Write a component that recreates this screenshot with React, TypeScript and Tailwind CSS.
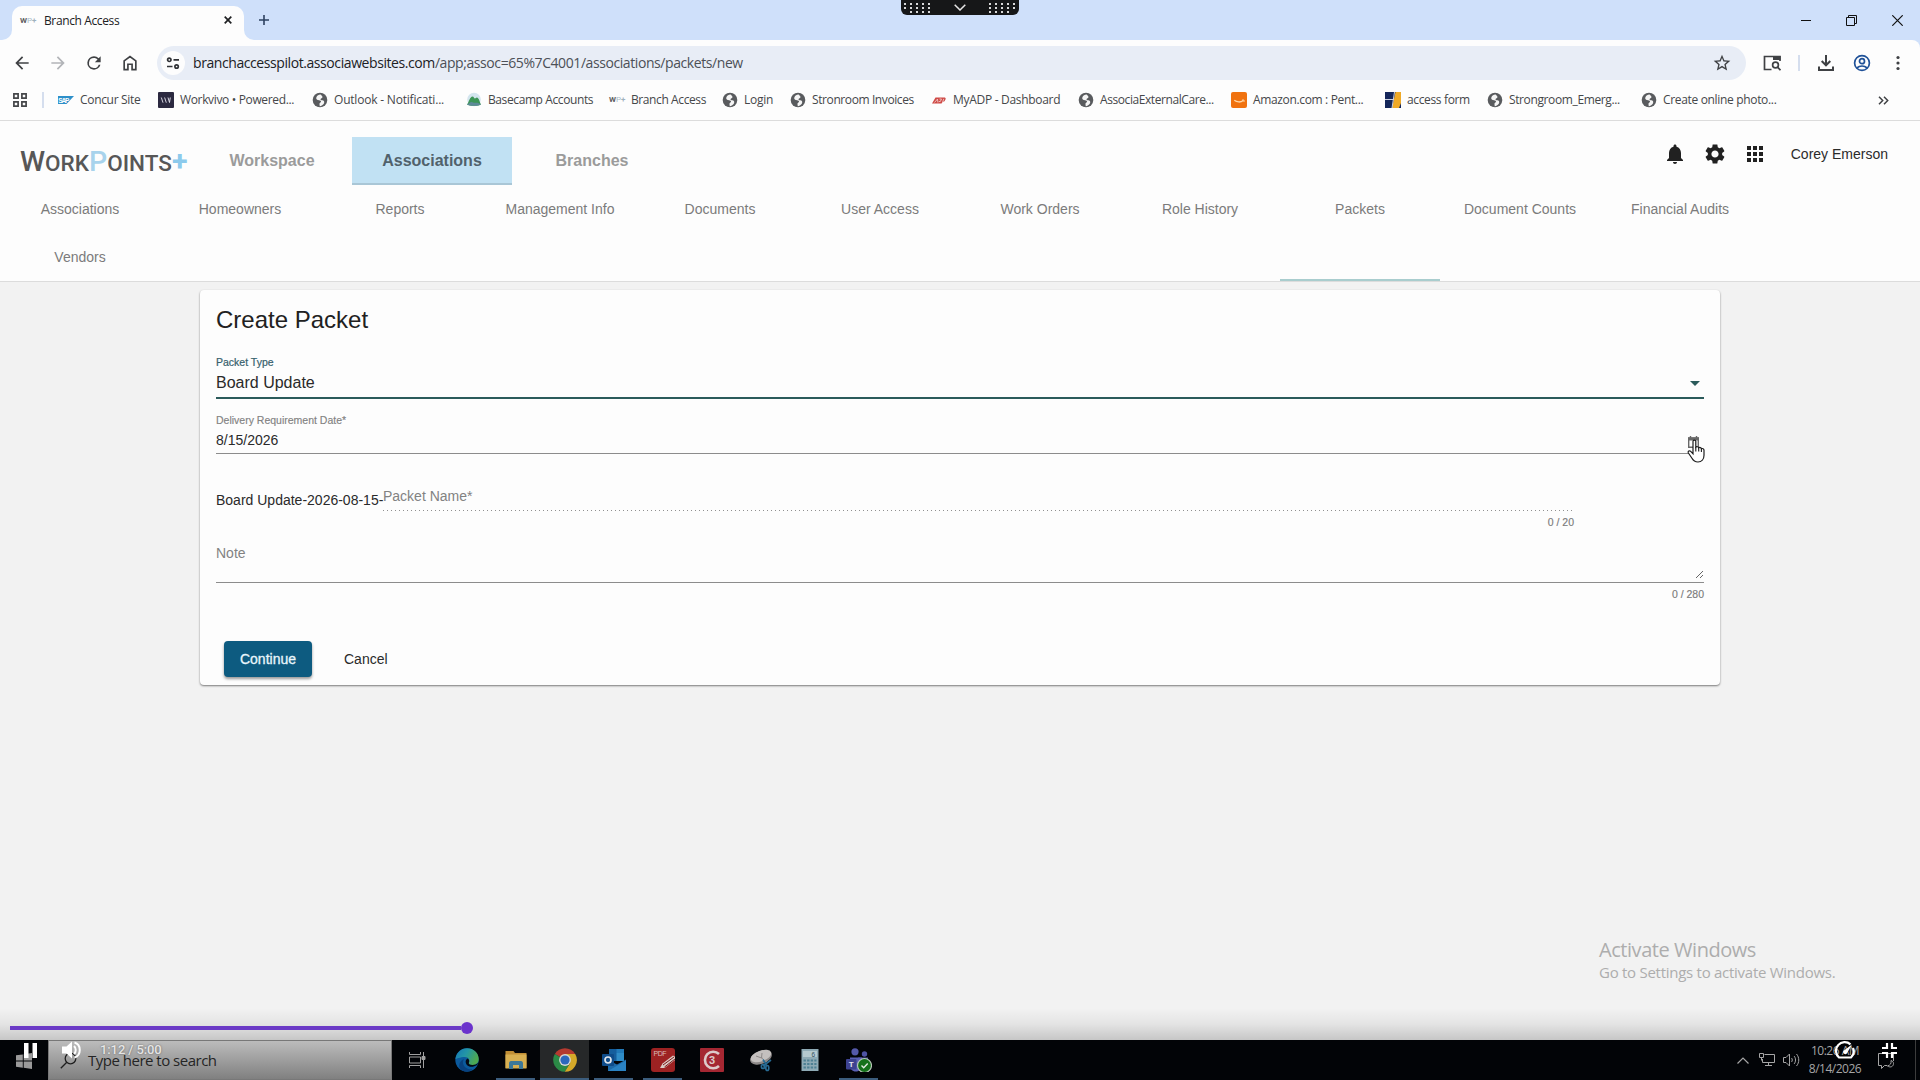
import React from "react";

interface Bookmark {
  label: string;
  icon: React.ReactNode;
  cell: string;
  tracking: string;
}

interface TaskApp {
  name: string;
  icon: React.ReactNode;
  state: "idle" | "open" | "active";
}

const GlobeIcon: React.FC = () => (
  <svg className="h-4 w-4 shrink-0" viewBox="0 0 16 16">
    <circle cx="8" cy="8" r="7.3" fill="#595b5e" />
    <path
      d="M8.600 2.600C7 2.400 5.200 3.600 4.400 5.200 3.800 6.600 4.600 7.600 6 8c1.300.3 2.800.3 3 1.300.2 1-1.200 1.300-1.500 2.300-.2.900.3 1.700.2 2.600 1.500.1 3.400-1.300 4.200-2.700.6-1.200.4-2.500-.7-3-1-.4-2.300-.2-2.700-1-.3-.8.9-1 1.500-1.500.8-.7.4-1.700-.2-2.200z"
      fill="#f5f5f5"
    />
  </svg>
);

const WpMark: React.FC = () => (
  <span className="flex h-4 w-4 shrink-0 items-center overflow-visible font-['Roboto',sans-serif] text-[8px] font-bold leading-none text-[#5f5f5f]">
    W<span className="font-normal text-[#a9bcc8]">P</span>
    <span className="text-[#9fb2bd]">+</span>
  </span>
);

const SapIcon: React.FC = () => (
  <svg className="h-4 w-4 shrink-0" viewBox="0 0 16 16">
    <path d="M0 4h16l-7.500 8H0z" fill="#2d8fc9" />
    <text x="0.300" y="10.500" fontSize="6.500" fontWeight="700" fontFamily="Liberation Sans" fill="#fff" textLength="11">
      SAP
    </text>
  </svg>
);

const WorkvivoIcon: React.FC = () => (
  <svg className="h-4 w-4 shrink-0" viewBox="0 0 16 16">
    <rect width="16" height="16" rx="1" fill="#2b2940" />
    <path d="M3.300 5.500l1.700 5.200M6.600 5.500l1.700 5.200M10 5.500l1.500 5 .8-5" stroke="#e8e6f0" strokeWidth=".9" fill="none" />
  </svg>
);

const BasecampIcon: React.FC = () => (
  <svg className="h-4 w-4 shrink-0" viewBox="0 0 16 16">
    <circle cx="8" cy="7.500" r="6.800" fill="#d3e5ee" />
    <path d="M1 12.500C3 10 4 4.500 6.500 4.500c1.300 0 1.500 2 2.500 2 .8 0 1-1 1.800-1C13 5.500 14 11 15 12.500c-2 1.700-12 1.700-14 0z" fill="#3c9557" />
    <path d="M1 12.500c2-.8 3-2.500 4.500-2.500s2 1 4 .8 3.500.2 5.500 1.700c-2 1.700-12 1.700-14 0z" fill="#5d8a98" />
  </svg>
);

const AdpIcon: React.FC = () => (
  <svg className="h-4 w-4 shrink-0" viewBox="0 0 16 16">
    <path d="M1 11.500L4.500 5.500h9.500l.8 1.200-1.300 2.600-2 .6-1 1.600z" fill="#cf4a46" />
    <path d="M3.500 10.500L6.500 7l.4 3.500M8.500 7h2L9.300 9.500H7.800M11.500 10.300l1.300-3.500" stroke="#f3d5d4" strokeWidth=".8" fill="none" />
  </svg>
);

const AmazonIcon: React.FC = () => (
  <svg className="h-4 w-4 shrink-0" viewBox="0 0 16 16">
    <rect width="16" height="16" rx="2" fill="#f0720f" />
    <path d="M3.300 8.300c2.500 2.200 6.500 2.200 9 .2" stroke="#ffd9a8" strokeWidth="1.300" fill="none" />
    <path d="M11 8h2v2" stroke="#ffd9a8" strokeWidth=".9" fill="none" />
  </svg>
);

const AccessIcon: React.FC = () => (
  <svg className="h-4 w-4 shrink-0" viewBox="0 0 16 16">
    <rect width="16" height="16" fill="#14265a" />
    <path d="M10.500 0H16v11l-2 5H7z" fill="#efa927" />
    <path d="M0 7.500h9M9.500 0L7 16" stroke="#c9cede" strokeWidth="1" />
  </svg>
);

const bookmarks: Bookmark[] = [
  { label: "Concur Site", icon: <SapIcon />, cell: "w-[100px]", tracking: "tracking-[-0.32px]" },
  { label: "Workvivo • Powered...", icon: <WorkvivoIcon />, cell: "w-[154px]", tracking: "tracking-[-0.35px]" },
  { label: "Outlook - Notificati...", icon: <GlobeIcon />, cell: "w-[154px]", tracking: "tracking-[-0.2px]" },
  { label: "Basecamp Accounts", icon: <BasecampIcon />, cell: "w-[143px]", tracking: "tracking-[-0.4px]" },
  { label: "Branch Access", icon: <WpMark />, cell: "w-[113px]", tracking: "tracking-[-0.4px]" },
  { label: "Login", icon: <GlobeIcon />, cell: "w-[68px]", tracking: "tracking-[-0.25px]" },
  { label: "Stronroom Invoices", icon: <GlobeIcon />, cell: "w-[141px]", tracking: "tracking-[-0.4px]" },
  { label: "MyADP - Dashboard", icon: <AdpIcon />, cell: "w-[147px]", tracking: "tracking-[-0.3px]" },
  { label: "AssociaExternalCare...", icon: <GlobeIcon />, cell: "w-[153px]", tracking: "tracking-[-0.42px]" },
  { label: "Amazon.com : Pent...", icon: <AmazonIcon />, cell: "w-[154px]", tracking: "tracking-[-0.35px]" },
  { label: "access form", icon: <AccessIcon />, cell: "w-[102px]", tracking: "tracking-[-0.35px]" },
  { label: "Strongroom_Emerg...", icon: <GlobeIcon />, cell: "w-[154px]", tracking: "tracking-[-0.38px]" },
  { label: "Create online photo...", icon: <GlobeIcon />, cell: "w-[140px]", tracking: "tracking-[-0.33px]" },
];

const subNav = [
  "Associations",
  "Homeowners",
  "Reports",
  "Management Info",
  "Documents",
  "User Access",
  "Work Orders",
  "Role History",
  "Packets",
  "Document Counts",
  "Financial Audits",
  "Vendors",
];

const TabStrip: React.FC = () => (
  <div className="flex h-10 items-end bg-[#cfe0fa]">
    <div className="relative ml-3 flex h-[34px] w-[232px] items-center rounded-t-[10px] bg-[#fdfdfd] pb-1 pl-2">
      <svg className="absolute -left-[10px] bottom-0 h-[10px] w-[10px]" viewBox="0 0 10 10">
        <path d="M10 0v10H0A10 10 0 0 0 10 0z" fill="#fdfdfd" />
      </svg>
      <svg className="absolute -right-[10px] bottom-0 h-[10px] w-[10px]" viewBox="0 0 10 10">
        <path d="M0 0v10h10A10 10 0 0 1 0 0z" fill="#fdfdfd" />
      </svg>
      <WpMark />
      <span className="ml-2 grow text-[12px] tracking-[-0.38px] text-[#202124]">Branch Access</span>
      <svg className="mb-[3px] mr-3 h-2 w-2" viewBox="0 0 8 8">
        <path d="M.7.7l6.600 6.600M7.300.7L.7 7.300" stroke="#1f2022" strokeWidth="1.700" />
      </svg>
    </div>
    <svg className="mb-[15px] ml-[15px] h-[10px] w-[10px]" viewBox="0 0 10 10">
      <path d="M5 0v10M0 5h10" stroke="#2d4160" strokeWidth="1.600" />
    </svg>
    <div className="mb-[14px] ml-auto mr-[17px] flex items-center gap-[35px]">
      <svg className="h-3 w-[10px]" viewBox="0 0 10 12">
        <path d="M0 6.500h10" stroke="#111" />
      </svg>
      <svg className="h-[11px] w-[11px]" viewBox="0 0 11 11">
        <path d="M.5 2.500h8v8h-8zM2.500 2.500v-2h8v8h-2" fill="none" stroke="#111" />
      </svg>
      <svg className="h-[11px] w-[11px]" viewBox="0 0 11 11">
        <path d="M.3.3l10.400 10.400M10.700.3L.3 10.700" stroke="#111" strokeWidth="1.200" />
      </svg>
    </div>
  </div>
);

const Toolbar: React.FC = () => (
  <div className="flex h-[46px] items-center rounded-tr-lg bg-[#fdfdfd]">
    <div className="flex w-[157px] items-center gap-4 pl-3 text-[#3f4144]">
      <svg className="h-5 w-5" viewBox="0 0 24 24" fill="currentColor">
        <path d="M20 11H7.830l5.590-5.590L12 4l-8 8 8 8 1.410-1.410L7.830 13H20v-2z" />
      </svg>
      <svg className="h-5 w-5 text-[#b2b4b8]" viewBox="0 0 24 24" fill="currentColor">
        <path d="M12 4l-1.410 1.410L16.170 11H4v2h12.170l-5.580 5.590L12 20l8-8z" />
      </svg>
      <svg className="h-5 w-5" viewBox="0 0 24 24" fill="currentColor">
        <path d="M17.650 6.350A7.958 7.958 0 0 0 12 4a8 8 0 1 0 7.730 10h-2.080A6 6 0 1 1 12 6c1.660 0 3.140.69 4.220 1.780L13 11h7V4l-2.350 2.350z" />
      </svg>
      <svg className="h-5 w-5" viewBox="0 0 24 24" fill="none" stroke="currentColor" strokeWidth="2">
        <path d="M5 20V9.500l7-5.300 7 5.300V20h-4.500v-6.500h-5V20z" />
      </svg>
    </div>
    <div className="flex h-[34px] w-[1589px] items-center rounded-full bg-[#e8edf6] pl-1 pr-[14px]">
      <span className="flex h-6 w-6 items-center justify-center rounded-full bg-[#fdfdfd]">
        <svg className="h-[14px] w-[14px]" viewBox="0 0 14 14" fill="none" stroke="#303236" strokeWidth="1.700">
          <circle cx="3.300" cy="3.800" r="1.700" />
          <path d="M7.500 3.800H13M1 10.500h5.500" />
          <circle cx="10.600" cy="10.500" r="1.700" />
        </svg>
      </span>
      <span className="mb-px ml-2 text-[14px] tracking-[-0.42px] text-[#4c5057]">
        <span className="text-[#202124]">branchaccesspilot.associawebsites.com</span>
        /app;assoc=65%7C4001/associations/packets/new
      </span>
      <svg className="ml-auto h-5 w-5" viewBox="0 0 24 24" fill="#3f4144">
        <path d="M22 9.240l-7.190-.62L12 2 9.190 8.630 2 9.240l5.460 4.730L5.820 21 12 17.270 18.180 21l-1.630-7.030L22 9.240zM12 15.400l-3.760 2.270 1-4.280-3.320-2.880 4.380-.38L12 6.100l1.710 4.040 4.380.38-3.320 2.880 1 4.280L12 15.400z" />
      </svg>
    </div>
    <div className="flex grow items-center text-[#3f4144]">
      <svg className="ml-[17px] h-[18px] w-[18px]" viewBox="0 0 18 18" fill="none" stroke="currentColor" strokeWidth="1.700">
        <path d="M8.500 15.500H1.500v-13H17V7" />
        <path d="M10 2h7.500v4H10z" fill="currentColor" stroke="none" />
        <circle cx="12.500" cy="11" r="2.900" />
        <path d="M14.500 13.200l3 3" />
      </svg>
      <span className="ml-[17px] h-4 w-[2px] bg-[#d5deee]" />
      <svg className="ml-[17px] h-[18px] w-[18px]" viewBox="0 0 18 18" fill="none" stroke="currentColor" strokeWidth="2">
        <path d="M9 1v10M4.700 7L9 11.300 13.300 7M2 12.500V16h14v-3.500" />
      </svg>
      <svg className="ml-[18px] h-[18px] w-[18px]" viewBox="0 0 18 18" fill="none" stroke="#1f5198" strokeWidth="1.700">
        <circle cx="9" cy="9" r="7.400" />
        <circle cx="9" cy="7.200" r="2.500" />
        <path d="M3.800 14c3-2.700 7.400-2.700 10.400 0" />
      </svg>
      <svg className="ml-[17px] h-5 w-5" viewBox="0 0 20 20" fill="currentColor">
        <circle cx="10" cy="4.500" r="1.600" />
        <circle cx="10" cy="10" r="1.600" />
        <circle cx="10" cy="15.500" r="1.600" />
      </svg>
    </div>
  </div>
);

const BookmarkBar: React.FC = () => (
  <div className="flex h-[34px] items-center bg-[#fdfdfd] pb-[6px] pl-[13px] text-[12px] text-[#45474a]">
    <svg className="h-[14px] w-[14px]" viewBox="0 0 14 14" fill="none" stroke="#45474a" strokeWidth="1.700">
      <path d="M.9.9h4.200v4.200H.9zM8.900.9h4.200v4.200H8.900zM.9 8.900h4.200v4.200H.9zM8.900 8.900h4.200v4.200H8.900z" />
    </svg>
    <span className="ml-[15px] mr-[14px] h-4 w-[2px] bg-[#d5deee]" />
    {bookmarks.map((b) => (
      <div key={b.label} className={`flex shrink-0 items-center gap-1.5 whitespace-nowrap ${b.cell}`}>
        {b.icon}
        <span className={b.tracking}>{b.label}</span>
      </div>
    ))}
    <svg className="ml-auto mr-[31px] h-[9px] w-[11px]" viewBox="0 0 11 9" fill="none" stroke="#3f4144" strokeWidth="1.500">
      <path d="M1 .8l3.700 3.700L1 8.200M6 .8l3.700 3.700L6 8.200" />
    </svg>
  </div>
);

const MainTab: React.FC<{ label: string; active?: boolean }> = ({ label, active }) => (
  <div
    className={`flex h-12 w-40 items-center justify-center border-b-2 pt-[2px] text-base font-bold ${
      active ? "border-[#a9c6d6] bg-[#c1e1f3] text-[#51616b]" : "border-transparent text-[#9b9b9b]"
    }`}
  >
    {label}
  </div>
);

const AppHeader: React.FC = () => (
  <header className="h-[162px] border-y border-[#dcdcdc] bg-[#fdfdfd]">
    <div className="flex h-16 pt-4">
      <div className="flex h-12 w-48 items-center pl-5 pt-[2px]">
        <div className="flex items-baseline font-['Roboto',sans-serif] text-[22.5px] font-medium leading-none text-[#575757]">
          <span className="text-[28.5px]">W</span>
          <span>ORK</span>
          <span className="text-[28.5px] text-[#a8d3ec]">P</span>
          <span>OINTS</span>
          <span className="text-[28.5px] font-bold text-[#8ccaec]">+</span>
        </div>
      </div>
      <MainTab label="Workspace" />
      <MainTab label="Associations" active />
      <MainTab label="Branches" />
      <div className="ml-auto mr-8 flex h-[33px] items-center text-sm text-[#2b2b2b]">
        <svg className="h-6 w-6" viewBox="0 0 24 24" fill="#212121">
          <path d="M12 22c1.100 0 2-.9 2-2h-4c0 1.100.89 2 2 2zm6-6v-5c0-3.070-1.640-5.640-4.500-6.320V4c0-.83-.67-1.500-1.500-1.500s-1.500.67-1.500 1.500v.68C7.630 5.360 6 7.920 6 11v5l-2 2v1h16v-1l-2-2z" />
        </svg>
        <svg className="ml-4 h-6 w-6" viewBox="0 0 24 24" fill="#212121">
          <path d="M19.140 12.940c.04-.3.06-.61.06-.94 0-.32-.02-.64-.07-.94l2.030-1.580c.18-.14.23-.41.12-.61l-1.920-3.320c-.12-.22-.37-.29-.59-.22l-2.390.96c-.5-.38-1.030-.7-1.620-.94l-.36-2.540c-.04-.24-.24-.41-.48-.41h-3.840c-.24 0-.43.17-.47.41l-.36 2.540c-.59.24-1.130.57-1.620.94l-2.390-.96c-.22-.08-.47 0-.59.22L2.740 8.870c-.12.21-.08.47.12.61l2.030 1.580c-.05.3-.09.63-.09.94s.02.64.07.94l-2.030 1.580c-.18.14-.23.41-.12.61l1.920 3.320c.12.22.37.29.59.22l2.390-.96c.5.38 1.030.7 1.620.94l.36 2.540c.05.24.24.41.48.41h3.840c.24 0 .44-.17.47-.41l.36-2.540c.59-.24 1.130-.56 1.620-.94l2.390.96c.22.08.47 0 .59-.22l1.920-3.320c.12-.22.07-.47-.12-.61l-2.010-1.580zM12 15.600c-1.980 0-3.600-1.620-3.600-3.600s1.620-3.600 3.600-3.600 3.600 1.620 3.600 3.600-1.620 3.600-3.600 3.600z" />
        </svg>
        <svg className="ml-4 mr-6 h-6 w-6" viewBox="0 0 24 24" fill="#212121">
          <path d="M4 8h4V4H4v4zm6 12h4v-4h-4v4zm-6 0h4v-4H4v4zm0-6h4v-4H4v4zm6 0h4v-4h-4v4zm6-10v4h4V4h-4zm-6 4h4V4h-4v4zm6 6h4v-4h-4v4zm0 6h4v-4h-4v4z" />
        </svg>
        Corey Emerson
      </div>
    </div>
    <nav className="flex w-[1780px] flex-wrap text-sm text-[#7b7b7b]">
      {subNav.map((item) => (
        <div key={item} className="relative flex h-12 w-40 items-center justify-center">
          {item}
          {item === "Packets" && <span className="absolute -bottom-12 left-0 h-[2px] w-full bg-[#a9cdce]" />}
        </div>
      ))}
    </nav>
  </header>
);

const HandCursor: React.FC = () => (
  <svg className="absolute right-0 top-[3px] z-10 h-6 w-[19px]" viewBox="0 0 19 24">
    <path
      d="M6 2.300C6 .6 8.800.6 8.800 2.300v5.900c.8-.9 2.700-.5 2.900.6.900-.7 2.500-.2 2.700.9 1-.5 2.600.1 2.600 1.600v5c0 4-2.500 6.700-6 6.700-3.300 0-4.800-1.500-6.200-4L1.400 14c-.9-1.700 1.100-2.900 2.300-1.700L6 14.700z"
      fill="#fff"
      stroke="#1d1d1d"
      strokeWidth="1.200"
    />
    <path d="M8.800 8v4.500M11.700 9v3.500M14.400 10v3" stroke="#1d1d1d" strokeWidth="1.100" />
  </svg>
);

const PacketForm: React.FC = () => (
  <section className="mx-auto mt-2 h-[395px] w-[1520px] rounded bg-[#fdfdfd] px-4 pt-4 text-sm text-[#2a2a2a] shadow-[0_1px_2px_rgba(0,0,0,0.5)]">
    <h1 className="h-[47px] text-2xl leading-7 text-[#212121]">Create Packet</h1>

    <div className="flex h-[46px] flex-col border-b-2 border-[#2b5b5b]">
      <label className="mt-[3px] text-[10.5px] leading-[12px] text-[#36606c] [-webkit-text-stroke:0.2px]">Packet Type</label>
      <div className="mt-[6px] flex items-center justify-between pr-1 text-base leading-[18px]">
        Board Update
        <svg className="h-[5px] w-[10px]" viewBox="0 0 10 5">
          <path d="M0 0h10L5 5z" fill="#2b5b5b" />
        </svg>
      </div>
    </div>

    <div className="relative flex h-[55px] flex-col border-b border-[#8c8c8c]">
      <label className="mt-[15px] text-[10.5px] leading-[12px] text-[#828282] [-webkit-text-stroke:0.15px]">Delivery Requirement Date*</label>
      <span className="mt-[6px] leading-[16px]">8/15/2026</span>
      <svg className="absolute bottom-[5px] right-[5px] h-3 w-[11px]" viewBox="0 0 11 12">
        <path d="M.7 2h9.600v9.300H.7zM2.500 0v2M8.500 0v2" fill="none" stroke="#686868" strokeWidth="1.400" />
        <path d="M0 1.500h11v3H0zM5 6.500h3v3H5z" fill="#686868" />
      </svg>
      <div className="absolute -bottom-[11px] -right-[2px] h-7 w-5">
        <HandCursor />
      </div>
    </div>

    <div className="flex h-[57px] items-end">
      <span className="mb-[3px] w-[167px] whitespace-nowrap leading-[16px]">Board Update-2026-08-15-</span>
      <div className="w-[1191px] text-[#828282]">
        <span className="mb-[6px] block leading-[16px]">Packet Name*</span>
        <div className="h-px bg-[linear-gradient(to_right,#909090_1px,transparent_1px)] bg-size-[4px_1px]" />
      </div>
    </div>
    <div className="h-[34px] w-[1358px] pt-1 text-right text-[10.5px] leading-[14px] text-[#7b7b7b] [-webkit-text-stroke:0.15px]">
      0 / 20
    </div>

    <div className="flex h-[38px] justify-between border-b border-[#8c8c8c] text-[#828282]">
      <span className="leading-[16px]">Note</span>
      <svg className="mb-1 mr-px mt-auto h-[7px] w-[7px]" viewBox="0 0 7 7">
        <path d="M0 7l7-7M4 7l3-3" stroke="#555" strokeWidth=".9" />
      </svg>
    </div>
    <div className="pt-1 text-right text-[10.5px] leading-[14px] text-[#7b7b7b] [-webkit-text-stroke:0.15px]">0 / 280</div>

    <div className="mt-[40px] flex items-center pl-2">
      <button className="h-9 w-[88px] rounded bg-[#0d5b80] text-[#e9f6fc] [-webkit-text-stroke:0.3px] shadow-[0_2px_3px_rgba(0,0,0,0.4)]">
        Continue
      </button>
      <button className="ml-8 h-9">Cancel</button>
    </div>
  </section>
);

const EdgeIcon: React.FC = () => (
  <svg className="h-6 w-6" viewBox="0 0 24 24">
    <defs>
      <linearGradient id="edgeTop" x1="0" x2="1" y1="0" y2=".4">
        <stop offset="0" stopColor="#1577b7" />
        <stop offset=".5" stopColor="#2396a6" />
        <stop offset="1" stopColor="#4ea950" />
      </linearGradient>
    </defs>
    <circle cx="12" cy="12" r="11.700" fill="#0b5a9d" />
    <path d="M.5 11C1.500 4.500 6 .3 12 .3c7 0 11.700 5 11.700 10.700 0 4-3 6-6.300 6-3 0-4.200-1.400-3.500-2.500 1.500-2.500-.5-5.500-4-5.500C5 9 1 11 .5 11z" fill="url(#edgeTop)" />
    <path d="M9 11c-3 5 1 11 8.500 10.200C14 24.500 7 24 5 20.500 3 17 5 12.500 9 11z" fill="#08417f" />
    <path d="M12.500 10.500c-2.500 1.500-2.300 5 0 7 2.300 1.800 6 1.800 9.500-.5l1.500-2.500c-1.500 1.700-3.700 2.500-6.100 2.500-3 0-4.200-1.400-3.500-2.500.7-1.300.4-3-1.400-4z" fill="#050a14" />
  </svg>
);

const FolderIcon: React.FC = () => (
  <svg className="h-6 w-6" viewBox="0 0 24 24">
    <path d="M1.500 3h8l1.500 2h11.500V20h-21z" fill="#c08e35" />
    <path d="M1.500 6.500h21V20.500h-21z" fill="#d8b052" />
    <path d="M5 21v-5.500c0-1.500.8-2.500 2-2.500h10c1.200 0 2 1 2 2.500V21h-4v-4H9v4z" fill="#3d7898" />
  </svg>
);

const ChromeIcon: React.FC = () => (
  <svg className="h-6 w-6" viewBox="0 0 24 24">
    <path d="M12 12L1.800 6A11.800 11.800 0 0 1 22.200 6z" fill="#b53a30" />
    <path d="M12 12L1.800 6a11.800 11.800 0 0 0 10 17.800L17 15z" fill="#2b8a46" />
    <path d="M12 6h10.200a11.800 11.800 0 0 1-10.400 17.800L17.200 15z" fill="#d5a929" />
    <circle cx="12" cy="12" r="5.900" fill="#d8d8d8" />
    <circle cx="12" cy="12" r="4.600" fill="#2c68be" />
  </svg>
);

const OutlookIcon: React.FC = () => (
  <svg className="h-6 w-6" viewBox="0 0 24 24">
    <path d="M7 1h15v12H7z" fill="#155e9d" />
    <path d="M14.500 5H22v8h-7.500z" fill="#2f8cc7" />
    <path d="M14.500 1H22v4h-7.500z" fill="#227ab9" />
    <path d="M6 12l9 4.500 9-5V23H6z" fill="#1c69a8" />
    <path d="M6 23l18-10.500V23z" fill="#2a82c2" />
    <rect x="0" y="6" width="12" height="12" rx="1" fill="#0f4c8a" />
    <circle cx="6" cy="12" r="3" fill="none" stroke="#e1e6ec" strokeWidth="1.700" />
  </svg>
);

const PdfIcon: React.FC = () => (
  <svg className="h-6 w-6" viewBox="0 0 24 24">
    <rect width="24" height="24" rx="3" fill="#9d2222" />
    <text x="2.500" y="7.500" fontSize="7" fontFamily="Liberation Sans" fill="#d9bdb8" textLength="13">
      PDF
    </text>
    <path d="M9 20l2.500-4.500L22 7.500l2 1.200V12l-10.500 8z" fill="#dacbc4" />
    <path d="M12 17l11-8M13.500 19l10.500-8" stroke="#7e1b1b" strokeWidth="1" />
  </svg>
);

const C3Icon: React.FC = () => (
  <svg className="h-6 w-6" viewBox="0 0 24 24">
    <rect width="24" height="24" rx="1" fill="#a52732" />
    <path d="M19 6A8.300 8.300 0 1 0 19 18" fill="none" stroke="#ddcaca" strokeWidth="2.600" />
    <text x="9" y="15.800" fontSize="11" fontWeight="700" fontFamily="Liberation Sans" fill="#ddcaca">
      3
    </text>
  </svg>
);

const SnipIcon: React.FC = () => (
  <svg className="h-6 w-6" viewBox="0 0 24 24">
    <ellipse cx="12" cy="9.500" rx="11.300" ry="6.500" transform="rotate(-20 12 9.500)" fill="#8d8988" />
    <ellipse cx="12" cy="8" rx="10.800" ry="5.300" transform="rotate(-20 12 8)" fill="#c4c0be" />
    <path d="M7 8l7 2.500M13 5l-.5 5" stroke="#8c8887" strokeWidth="1" />
    <g fill="none" stroke="#286b93" strokeWidth="1.700">
      <path d="M14 11.500l3.500 6M22 12l-8 6" />
      <ellipse cx="14" cy="18.500" rx="1.600" ry="2" />
      <ellipse cx="18.300" cy="20" rx="1.500" ry="2.500" />
    </g>
  </svg>
);

const CalcIcon: React.FC = () => (
  <svg className="h-6 w-6" viewBox="0 0 24 24">
    <rect x="3.500" y="1" width="17" height="22" fill="#8eaab5" />
    <rect x="5" y="3" width="14" height="6" fill="#b5c9cf" />
    <text x="13.500" y="8.500" fontSize="6.500" fontFamily="Liberation Sans" fill="#33505c">6</text>
    <path d="M5.500 12.500h13M5.500 16h13M5.500 19.500h13" stroke="#4f8093" strokeWidth="1.800" strokeDasharray="2.400 1.200" />
  </svg>
);

const TeamsIcon: React.FC = () => (
  <svg className="h-6 w-[26px]" viewBox="0 0 26 24">
    <circle cx="9" cy="3.800" r="3.600" fill="#5459a9" />
    <circle cx="18.500" cy="6" r="2.700" fill="#4e53a2" />
    <path d="M12 9.500h10v8c0 3-2.500 5-5.500 5z" fill="#4a4f9c" />
    <path d="M4 9.500h12V17c0 4-2.600 6.500-6.200 6.500S4 21 4 17.500z" fill="#5a60b5" />
    <rect x="0" y="11" width="10.500" height="10.500" rx="1" fill="#3d4291" />
    <text x="2.800" y="19" fontSize="8" fontWeight="700" fontFamily="Liberation Sans" fill="#e4e4ee">T</text>
    <circle cx="18.500" cy="17.500" r="7" fill="#15711b" stroke="#b7c6b8" strokeWidth="1.200" />
    <path d="M15.500 17.500l2.200 2.200 4-4.200" fill="none" stroke="#e4ece4" strokeWidth="1.400" />
  </svg>
);

const taskApps: TaskApp[] = [
  { name: "edge", icon: <EdgeIcon />, state: "idle" },
  { name: "files", icon: <FolderIcon />, state: "open" },
  { name: "chrome", icon: <ChromeIcon />, state: "active" },
  { name: "outlook", icon: <OutlookIcon />, state: "open" },
  { name: "pdf", icon: <PdfIcon />, state: "open" },
  { name: "c3", icon: <C3Icon />, state: "idle" },
  { name: "snip", icon: <SnipIcon />, state: "idle" },
  { name: "calc", icon: <CalcIcon />, state: "idle" },
  { name: "teams", icon: <TeamsIcon />, state: "open" },
];

const Taskbar: React.FC = () => (
  <div className="flex h-10 bg-[#020407]">
    <div className="flex w-12 items-center justify-center">
      <svg className="mt-px h-4 w-4" viewBox="0 0 16 16" fill="#9a9a9a">
        <path d="M0 2.300l6.800-.9v6.200H0zM7.700 1.200L16 0v7.600H7.700zM0 8.500h6.800v6.200L0 13.700zM7.700 8.500H16V16l-8.300-1.200z" />
      </svg>
    </div>
    <div className="flex w-[344px] items-center border border-[#787878] bg-[linear-gradient(to_bottom,#bcbcbc,#808080)] pl-[11px] text-[#252525]">
      <svg className="h-[17px] w-[17px]" viewBox="0 0 17 17" fill="none" stroke="#1f1f1f" strokeWidth="1.300">
        <circle cx="10.500" cy="6.500" r="5.300" />
        <path d="M6.800 10.300L.8 16.300" />
      </svg>
      <span className="ml-[11px] mt-px text-[15px] tracking-[-0.5px]">Type here to search</span>
    </div>
    <div className="flex w-[50px] items-center justify-center">
      <svg className="h-4 w-[17px]" viewBox="0 0 17 16" fill="none" stroke="#a0a0a0">
        <path d="M.5 0v2.500h11V0M.5 16v-2.500h11V16M.5 5h11v6H.5zM14.500 0v16" />
        <path d="M13 4.500h3v3h-3z" fill="#a0a0a0" />
      </svg>
    </div>
    {taskApps.map((app) => (
      <div
        key={app.name}
        className={`relative flex w-[49px] items-center justify-center ${app.state === "active" ? "bg-[#262829]" : ""}`}
      >
        {app.icon}
        {app.state !== "idle" && (
          <span
            className={`absolute bottom-0 h-[2px] bg-[#3c5d7d] ${app.state === "active" ? "inset-x-0" : "inset-x-[5px]"}`}
          />
        )}
      </div>
    ))}
    <div className="ml-auto flex items-center border-r border-[#3c3c3c] pr-[20px] text-[#a6a6a6]">
      <svg className="h-[7px] w-3" viewBox="0 0 12 7" fill="none" stroke="currentColor" strokeWidth="1.200">
        <path d="M.5 6.500L6 1l5.500 5.500" />
      </svg>
      <svg className="ml-[10px] h-[14px] w-4" viewBox="0 0 16 14" fill="none" stroke="currentColor">
        <path d="M5.500 1.500h10v8H3.500V6M9.500 9.500v3M6 12.500h7M.5.500h4v4h-4zM2.500 4.500v3" />
      </svg>
      <svg className="ml-[8px] h-[14px] w-[17px]" viewBox="0 0 17 14" fill="none" stroke="currentColor">
        <path d="M.5 4.500h2.500L6.500 1v12L3 9.500H.5zM8.500 5c1 1 1 3 0 4M11 3c2 2 2 6 0 8M13.500 1c3 3.500 3 8.500 0 12" />
      </svg>
      <div className="ml-2 w-[54px] text-center text-[12px] leading-[18px] tracking-[-0.5px] whitespace-nowrap">
        <div>10:26 AM</div>
        <div>8/14/2026</div>
      </div>
      <svg className="ml-[16px] h-[17px] w-[17px]" viewBox="0 0 17 17" fill="none" stroke="currentColor">
        <path d="M15.500 9V1.500H.5v12h3v3l3-3H9" />
        <path d="M13 8.500c.5 3-.5 4.500-3.500 5.500 3 2 6 .5 6-2.500 0-1.500-1-2.500-2.500-3z" />
      </svg>
    </div>
    <div className="w-1" />
  </div>
);

// player controls drawn over the recorded desktop
const PlayerOverlay: React.FC = () => (
  <div className="absolute inset-x-0 bottom-0 h-[60px]">
    <div className="flex h-[16px] items-center pl-[10px]">
      <div className="h-1 w-[451px] bg-[#6b3ac6]" />
      <div className="h-3 w-3 rounded-full bg-[#6b33cc]" />
    </div>
    <div className="flex h-[28px] items-center px-6 text-white">
      <svg className="h-[15px] w-[13px]" viewBox="0 0 13 15" fill="#fff">
        <path d="M0 0h4.500v15H0zM8.500 0H13v15H8.500z" />
      </svg>
      <svg className="ml-[25px] h-[18px] w-[19px]" viewBox="0 0 19 18">
        <path d="M0 5.500h4.500L10 .5v17l-5.500-5H0z" fill="#fff" />
        <path d="M12 5c2.300 2 2.300 6 0 8M12.500 1.500c7 2 7 13 0 15" fill="none" stroke="#fff" strokeWidth="2" />
      </svg>
      <span className="mb-px ml-[19px] font-['Roboto',sans-serif] text-[13px] font-medium leading-none tracking-[-0.1px] text-[#e6e6e6] [text-shadow:0_0_2px_rgba(0,0,0,0.5)]">
        1:12 / 5:00
      </span>
      <svg className="ml-auto h-[18px] w-5" viewBox="0 0 20 18">
        <path d="M15.500 3.300A8.500 8.500 0 0 0 4 16.500h12a8.500 8.500 0 0 0 2-9.500" fill="none" stroke="#fff" strokeWidth="2.200" />
        <path d="M17 3.500l-5.200 9A2.200 2.200 0 0 1 8.300 10z" fill="#fff" />
      </svg>
      <svg className="ml-[27px] mr-[-1px] h-[15px] w-[15px]" viewBox="0 0 15 15" fill="none" stroke="#fff" strokeWidth="2.200">
        <path d="M5 0v5H0M10 0v5h5M5 15v-5H0M10 15v-5h5" />
      </svg>
    </div>
  </div>
);

const RemotePill: React.FC = () => (
  <div className="absolute left-[901px] top-0 flex h-[15px] w-[118px] items-center justify-between rounded-b-md bg-[#161718] px-[3px]">
    <svg className="h-3 w-[27px]" viewBox="0 0 27 12">
      <path d="M0 2h27M0 6h27M6 10h21" stroke="#d8d8d8" strokeWidth="1.800" strokeDasharray="2 4" />
    </svg>
    <svg className="h-[7px] w-3" viewBox="0 0 12 7">
      <path d="M.7.700L6 6l5.300-5.300" fill="none" stroke="#e6e6e6" strokeWidth="1.500" />
    </svg>
    <svg className="h-3 w-[27px]" viewBox="0 0 27 12">
      <path d="M0 2h27M0 6h27M0 10h21" stroke="#d8d8d8" strokeWidth="1.800" strokeDasharray="2 4" />
    </svg>
  </div>
);

const App: React.FC = () => {
  return (
    <div className="relative flex h-[1080px] w-[1920px] flex-col overflow-hidden bg-[#f2f2f2] font-['Open_Sans','Noto_Sans',sans-serif]">
      <TabStrip />
      <div className="bg-[#cfe0fa]">
        <Toolbar />
      </div>
      <BookmarkBar />
      <main className="relative grow font-['Liberation_Sans',Arial,sans-serif]">
        <AppHeader />
        <PacketForm />
        <div className="absolute inset-x-0 bottom-0 h-8 bg-[linear-gradient(to_bottom,transparent,rgba(0,0,0,0.06)_50%,rgba(0,0,0,0.18))]" />
        <div className="absolute left-[1599px] top-[816px] whitespace-nowrap font-['Open_Sans',sans-serif] text-[#adadad]">
          <div className="text-[20px] leading-[27px] tracking-[-0.45px]">Activate Windows</div>
          <div className="text-[15px] leading-[18px] tracking-[-0.27px]">Go to Settings to activate Windows.</div>
        </div>
      </main>
      <Taskbar />
      <PlayerOverlay />
      <RemotePill />
    </div>
  );
};

export default App;
